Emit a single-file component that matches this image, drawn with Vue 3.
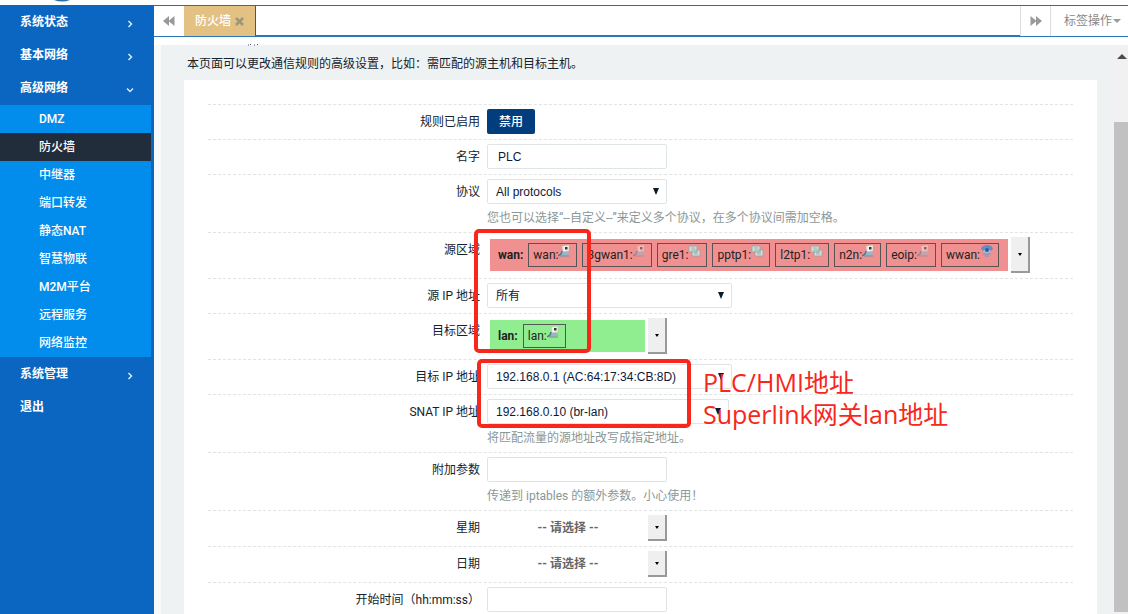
<script setup>
import { ref } from 'vue'

const subItems = ['DMZ', '防火墙', '中继器', '端口转发', '静态NAT', '智慧物联', 'M2M平台', '远程服务', '网络监控']
const menu = [
  { label: '系统状态', arrow: 'right' },
  { label: '基本网络', arrow: 'right' },
  { label: '高级网络', arrow: 'down', children: subItems },
  { label: '系统管理', arrow: 'right' },
  { label: '退出' }
]
const wanPorts = [
  { name: 'wan', icon: 'port' },
  { name: '3gwan1', icon: 'port', dim: true },
  { name: 'gre1', icon: 'tunnel' },
  { name: 'pptp1', icon: 'tunnel' },
  { name: 'l2tp1', icon: 'tunnel' },
  { name: 'n2n', icon: 'port' },
  { name: 'eoip', icon: 'port', dim: true },
  { name: 'wwan', icon: 'wifi' }
]
const lanPorts = [{ name: 'lan', icon: 'port' }]
const rows = [
  { id: 'enabled', label: '规则已启用', type: 'button' },
  { id: 'name', label: '名字', type: 'input' },
  { id: 'proto', label: '协议', type: 'select', value: 'All protocols', hint: '您也可以选择“--自定义--”来定义多个协议，在多个协议间需加空格。' },
  { id: 'src', label: '源区域', type: 'zone', zone: 'wan', ports: wanPorts },
  { id: 'srcip', label: '源 IP 地址', type: 'select', value: '所有', size: 'wide' },
  { id: 'dest', label: '目标区域', type: 'zone', zone: 'lan', ports: lanPorts },
  { id: 'destip', label: '目标 IP 地址', type: 'select', value: '192.168.0.1 (AC:64:17:34:CB:8D)', size: 'wide' },
  { id: 'snat', label: 'SNAT IP 地址', type: 'select', value: '192.168.0.10 (br-lan)', size: 'mid', hint: '将匹配流量的源地址改写成指定地址。' },
  { id: 'extra', label: '附加参数', type: 'input', hint: '传递到 iptables 的额外参数。小心使用！' },
  { id: 'week', label: '星期', type: 'picker' },
  { id: 'day', label: '日期', type: 'picker' },
  { id: 'start', label: '开始时间（hh:mm:ss）', type: 'input' }
]
const values = ref({ name: 'PLC', extra: '', start: '' })
</script>

<template>
  <div class="page">
    <header class="top">
      <svg class="logo" width="24" height="2" viewBox="0 0 24 2" aria-hidden="true"><path d="M4 0H20Q12 3 4 0Z" fill="#2b70ad" /></svg>
    </header>
    <div class="body">
      <nav class="side">
        <template v-for="m in menu" :key="m.label">
          <a href="#" class="item">
            <span>{{ m.label }}</span>
            <svg v-if="m.arrow" width="8" height="8" viewBox="0 0 8 8" aria-hidden="true">
              <path :d="m.arrow === 'right' ? 'M2.5 1L5.5 4L2.5 7' : 'M1 2.5L4 5.5L7 2.5'" fill="none" stroke="#d5ebff" stroke-width="1.5" />
            </svg>
          </a>
          <div v-if="m.children" class="sub">
            <a v-for="c in m.children" :key="c" href="#" :class="{ active: c === '防火墙' }">{{ c }}</a>
          </div>
        </template>
      </nav>
      <main class="main">
        <div class="tabs">
          <button class="roll" aria-label="向左滚动">
            <svg width="12" height="10" viewBox="0 0 12 10"><path d="M6 0V10L0 5ZM11.5 0V10L5.5 5Z" fill="#999" /></svg>
          </button>
          <button class="tab">防火墙
            <svg width="9" height="9" viewBox="0 0 9 9" aria-hidden="true"><path d="M1 1L8 8M8 1L1 8" stroke="#9b9582" stroke-width="2.6" /></svg>
          </button>
          <div class="space"></div>
          <button class="roll right" aria-label="向右滚动">
            <svg width="12" height="10" viewBox="0 0 12 10"><path d="M6 0V10L12 5ZM0.5 0V10L6.5 5Z" fill="#999" /></svg>
          </button>
          <button class="ops">标签操作<svg width="8" height="4" viewBox="0 0 8 4" aria-hidden="true"><path d="M0 0H8L4 4Z" fill="#999" /></svg></button>
        </div>
        <div class="frame">
          <div class="content">
            <svg class="trace" width="12" height="2" viewBox="0 0 12 2" aria-hidden="true"><path d="M1 1H2M4 0L3 1M7 1H8M10 0L11 1" stroke="#54616a" /></svg>
            <p class="desc">本页面可以更改通信规则的高级设置，比如：需匹配的源主机和目标主机。</p>
            <form class="card" @submit.prevent>
              <div v-for="r in rows" :key="r.id" class="row">
                <label :for="r.id" class="label">{{ r.label }}</label>
                <div class="field">
                  <button v-if="r.type === 'button'" :id="r.id" type="button" class="primary">禁用</button>
                  <input v-else-if="r.type === 'input'" :id="r.id" v-model="values[r.id]" type="text" class="box">
                  <div v-else-if="r.type === 'select'" class="select" :class="r.size">
                    <select :id="r.id" class="box"><option>{{ r.value }}</option></select>
                    <svg width="8" height="7" viewBox="0 0 8 7" aria-hidden="true"><path d="M1 0H7L4 7Z" fill="#0b1a2a" /></svg>
                  </div>
                  <div v-else-if="r.type === 'zone'" class="combo">
                    <div class="zone" :class="r.zone">
                      <strong>{{ r.zone }}:</strong>
                      <span v-for="p in r.ports" :key="p.name" class="port">{{ p.name }}:<svg width="14" height="14" viewBox="0 0 14 14" :class="{ dim: p.dim }" aria-hidden="true">
                        <g v-if="p.icon === 'port'">
                          <path d="M4 2L11 1V7L5 8Z" fill="#f1f1ef" stroke="#b5b5ae" stroke-width=".5" />
                          <path d="M7 3h2.500v2.500H7z" fill="#333" />
                          <path d="M3 8L10 8L12 11L1 12Z" fill="#9fb4c2" />
                          <path d="M0 12L3 10L4 7" fill="none" stroke="#4d7890" stroke-width="1.5" />
                          <path d="M2 12H11" stroke="#728d9b" />
                        </g>
                        <g v-else-if="p.icon === 'tunnel'" stroke="#92a5a1" stroke-width=".8">
                          <path d="M1 2H9V8H1ZM4 6H12V12H4Z" fill="#d2dedb" />
                          <path d="M3 4H7M6 8H10M6 10H10" />
                        </g>
                        <g v-else>
                          <path d="M1 5Q2 1 7 1Q12 1 13 5L11 7Q7 4 3 7Z" fill="#688dc2" />
                          <path d="M3 7Q7 3 11 7L9 10H5Z" fill="#9db9dc" />
                          <circle cx="7" cy="6" r="2" fill="#325f9c" />
                          <path d="M3 10H11M5 12H9" stroke="#7594be" />
                        </g>
                      </svg></span>
                    </div>
                    <button :id="r.id" type="button" class="drop" :aria-label="r.label"><svg width="4" height="3" viewBox="0 0 4 3"><path d="M0 0H4L2 3Z" /></svg></button>
                  </div>
                  <div v-else class="combo">
                    <span class="choose">-- 请选择 --</span>
                    <button :id="r.id" type="button" class="drop" :aria-label="r.label"><svg width="4" height="3" viewBox="0 0 4 3"><path d="M0 0H4L2 3Z" /></svg></button>
                  </div>
                  <p v-if="r.hint" class="hint">{{ r.hint }}</p>
                </div>
              </div>
              <div class="mark zones"></div>
              <div class="mark addresses"></div>
              <p class="note">PLC/HMI地址<br>Superlink网关lan地址</p>
            </form>
          </div>
          <div class="scroll" aria-hidden="true">
            <svg width="10" height="5" viewBox="0 0 10 5"><path d="M0 5L5 0L10 5Z" fill="#4b4b4b" /></svg>
            <div class="thumb"></div>
          </div>
        </div>
      </main>
    </div>
  </div>
</template>

<style>
body { margin: 0; }
</style>

<style scoped>
* { box-sizing: border-box; }
.page { height: 100vh; display: flex; flex-direction: column; overflow: hidden; background: #fff; color: #14232d; font: 12px/18px Roboto, "Noto Sans CJK SC", sans-serif; font-variant-ligatures: none; }
button, input, select { font: inherit; margin: 0; }
a { text-decoration: none; }
p { margin: 0; }
.top { flex: none; height: 5px; padding-left: 50px; }
.logo { display: block; }
.body { flex: 1; min-height: 0; display: flex; }
.side { flex: none; width: 154px; background: #0b66c1; color: #fff; }
.item { display: flex; align-items: center; justify-content: space-between; height: 33px; padding: 0 20px; color: #fff; font-weight: 700; }
.item svg { margin-top: 4px; }
.sub { margin: 1px 3px 0 0; background: #028dec; }
.sub a { display: block; height: 28px; line-height: 28px; padding-left: 39px; color: #fff; font-weight: 500; }
.sub .active { background: #212d3b; }
.main { flex: 1; min-width: 0; display: flex; flex-direction: column; }
.tabs { flex: none; display: flex; height: 32px; border-top: 1px solid #2b6cb0; border-bottom: 1px solid #2b77bd; background: #fff; }
.tabs button { border: 0; padding: 0; background: #fff; color: #888; display: flex; align-items: center; justify-content: center; }
.tabs .roll { width: 30px; }
.tabs .tab { width: 72px; gap: 4px; background: #e3c182; color: #fff; font-weight: 500; border-right: 1px solid #555; }
.space { flex: 1; border-bottom: 1px solid #2b77bd; }
.tabs .right { border-left: 1px solid #ddd; }
.tabs .ops { width: 78px; border-left: 1px solid #ddd; padding-left: 6px; gap: 1px; }
.frame { flex: 1; min-height: 0; display: flex; margin-top: 8px; background: #eff2f3; border-left: 7px solid #f7f9fa; }
.content { position: relative; flex: 1; min-width: 0; padding: 0 16px 0 23px; }
.trace { position: absolute; left: 86px; top: -1px; }
.desc { height: 35px; line-height: 38px; padding-left: 3px; }
.card { position: relative; background: #fff; padding: 24px 24px 30px; }
.row { display: flex; gap: 7px; border-top: 1px dashed #e1e4e5; padding: 4px 0 5px; }
.label { flex: none; width: 272px; height: 25px; line-height: 26px; text-align: right; white-space: nowrap; }
.field { flex: 1; min-width: 0; }
.primary { display: block; width: 48px; height: 25px; padding: 0; border: 0; border-radius: 2px; background: #023e7d; color: #fff; font-weight: 500; }
.box { display: block; width: 180px; height: 25px; padding: 0 10px; border: 1px solid #dfe5e7; border-radius: 2px; background: #fff; color: #0c1a3a; font-family: "Liberation Sans", "Noto Sans CJK SC", sans-serif; appearance: none; outline: 0; }
.select { position: relative; width: 180px; }
.select .box { width: 100%; padding: 0 8px; }
.select svg { position: absolute; right: 7px; top: 9px; }
.select.wide { width: 245px; }
.select.mid { width: 242px; }
.hint { height: 23px; line-height: 28px; color: #8b9797; }
.combo { display: flex; align-items: center; gap: 3px; }
.zone { display: flex; align-items: center; gap: 5px; min-width: 155px; height: 32px; padding: 0 9px 0 8px; margin-left: 3px; color: #222; white-space: nowrap; }
.zone.wan { background: #f09090; }
.zone.lan { background: #90ee90; }
.port { display: inline-flex; height: 24px; padding: 0 4px; border: 1px solid #555; line-height: 22px; }
.dim { opacity: .5; }
.drop { width: 19px; height: 36px; padding: 0; border: 0; border-right: 2px solid #999; border-bottom: 2px solid #999; background: #efefef; display: flex; align-items: center; justify-content: center; }
.choose { width: 158px; padding-left: 4px; text-align: center; color: #666; font-weight: 700; }
.choose + .drop { height: 26px; }
.mark { position: absolute; border: 4px solid #f8271b; border-radius: 5px; }
.zones { left: 290px; top: 149px; width: 117px; height: 124px; }
.addresses { left: 293px; top: 279px; width: 214px; height: 69px; }
.note { position: absolute; left: 519px; top: 286px; color: #f8271b; font: 25px/32px "Open Sans", "Noto Sans CJK SC", sans-serif; white-space: nowrap; }
.scroll { flex: none; width: 15px; display: flex; flex-direction: column; align-items: flex-end; padding: 9px 0 2px; background: #f1f1f1; }
.scroll svg { margin-right: 1px; }
.thumb { flex: 1; width: 14px; margin-top: 63px; background: #c1c1c1; }
</style>
